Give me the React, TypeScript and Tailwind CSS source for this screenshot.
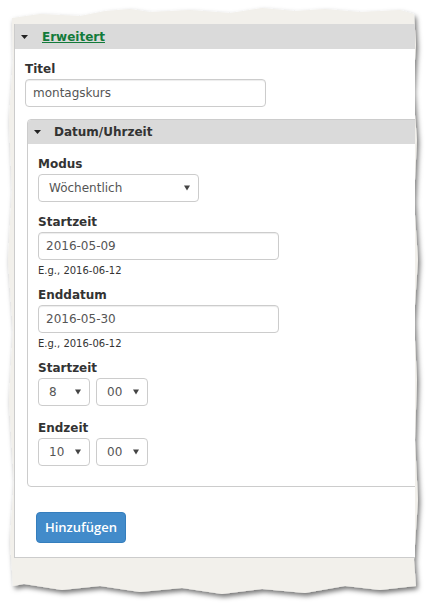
import React from "react";

const font = "font-['DejaVu_Sans',sans-serif]";

function Caret() {
  return (
    <svg width="7" height="4" viewBox="0 0 7 4">
      <path d="M0 0 H7 L3.5 4 Z" fill="#222" />
    </svg>
  );
}

function Paper() {
  const d =
    "M12 18 L40 14 L80 16 L105 11 L130 9 L150 12 L190 10 L230 13 L262 8 L295 11 L325 9 L360 12 L400 10 L414 14 " +
    "L416 45 L413 90 L417 140 L414 200 L418 260 L414 320 L417 380 L415 440 L418 500 L414 560 L416 586 " +
    "L380 590 L345 586 L305 593 L262 589 L222 594 L182 588 L140 592 L100 586 L62 590 L24 584 L13 586 " +
    "L10 540 L14 480 L9 400 L13 330 L8 260 L12 190 L9 120 L13 60 Z";
  return (
    <svg className="absolute inset-0" width="434" height="604" viewBox="0 0 434 604">
      <defs>
        <filter id="sh" x="-5%" y="-5%" width="110%" height="110%">
          <feDropShadow dx="2" dy="3" stdDeviation="2.5" floodColor="#000" floodOpacity="0.55" />
        </filter>
      </defs>
      <path d={d} fill="#f2f0eb" filter="url(#sh)" />
    </svg>
  );
}

function Label({ children }: { children: React.ReactNode }) {
  return <div className="text-[12px] leading-[18px] font-bold text-[#333] mb-[1px]">{children}</div>;
}

function TextBox({ value, w }: { value: string; w: string }) {
  return (
    <div
      className={`${w} h-[28px] border border-[#ccc] rounded-[4px] bg-white shadow-[inset_0_1px_1px_rgba(0,0,0,0.075)] flex items-center px-[7px] text-[12px] text-[#555]`}
    >
      {value}
    </div>
  );
}

function Select({ value, w }: { value: string; w: string }) {
  return (
    <div
      className={`${w} h-[28px] border border-[#ccc] rounded-[4px] bg-white flex items-center justify-between pl-[10px] pr-[8px] text-[12px] text-[#555]`}
    >
      <span>{value}</span>
      <svg width="6" height="6" viewBox="0 0 6 6">
        <path d="M0 0.5 H6 L3 5.5 Z" fill="#444" />
      </svg>
    </div>
  );
}

function Hint() {
  return <div className="text-[10px] leading-[14px] text-[#333] mt-[4px]">E.g., 2016-06-12</div>;
}

export default function App() {
  return (
    <div className={`relative w-[434px] h-[604px] bg-white overflow-hidden ${font}`}>
      <Paper />
      <div className="relative pt-[24px] pl-[14px] w-[415px]">
        <div className="bg-white border-l border-b border-[#ccc] overflow-hidden h-[534px]">
          {/* Erweitert */}
          <div className="h-[25px] bg-[#dadada] flex items-center pl-[6px]">
            <Caret />
            <span className="ml-[14px] text-[12px] font-bold text-[#137a3a] underline">Erweitert</span>
          </div>

          <div className="pl-[10px] pt-[11px]">
            <Label>Titel</Label>
            <TextBox value="montagskurs" w="w-[241px]" />

            {/* Datum/Uhrzeit */}
            <div className="mt-[12px] ml-[2px] w-[420px] h-[368px] border border-[#ccc] rounded-[4px] overflow-hidden">
              <div className="h-[24px] bg-[#dadada] flex items-center pl-[6px]">
                <Caret />
                <span className="ml-[13px] text-[12px] font-bold text-[#333]">Datum/Uhrzeit</span>
              </div>
              <div className="pl-[10px] pt-[11px]">
                <Label>Modus</Label>
                <Select value="Wöchentlich" w="w-[161px]" />

                <div className="mt-[11px]">
                  <Label>Startzeit</Label>
                  <TextBox value="2016-05-09" w="w-[241px]" />
                  <Hint />
                </div>

                <div className="mt-[8px]">
                  <Label>Enddatum</Label>
                  <TextBox value="2016-05-30" w="w-[241px]" />
                  <Hint />
                </div>

                <div className="mt-[8px]">
                  <Label>Startzeit</Label>
                  <div className="flex gap-[6px]">
                    <Select value="8" w="w-[52px]" />
                    <Select value="00" w="w-[52px]" />
                  </div>
                </div>

                <div className="mt-[13px]">
                  <Label>Endzeit</Label>
                  <div className="flex gap-[6px]">
                    <Select value="10" w="w-[52px]" />
                    <Select value="00" w="w-[52px]" />
                  </div>
                </div>
              </div>
            </div>

            <button className="mt-[25px] ml-[11px] w-[90px] h-[31px] rounded-[4px] bg-[#428bca] border border-[#357ebd] text-white text-[13px] font-semibold font-['Open_Sans',sans-serif]">
              Hinzufügen
            </button>
          </div>
        </div>
      </div>
    </div>
  );
}
